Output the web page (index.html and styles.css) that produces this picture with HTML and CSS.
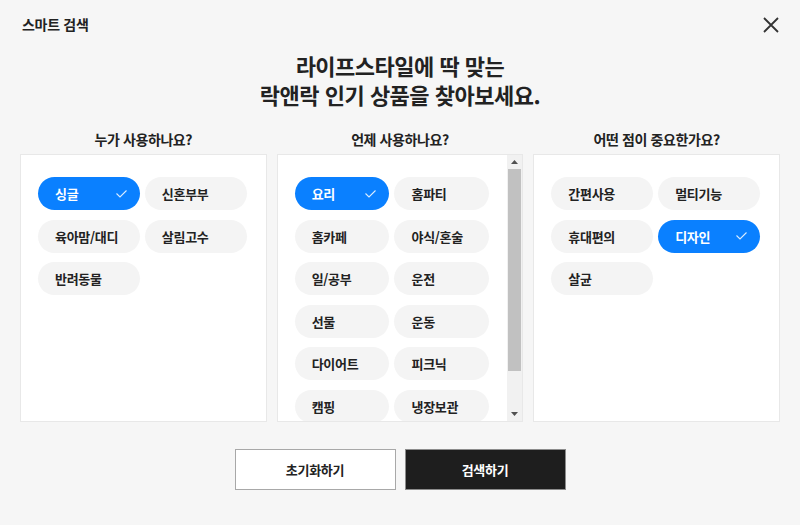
FILE: index.html
```html
<!doctype html>
<html lang="ko">
  <head>
    <meta charset="utf-8">
    <title>스마트 검색</title>
    <link rel="stylesheet" href="styles.css">
  </head>
  <body>
    <div class="modal">
      <div class="modal-header">
        <div class="modal-title">스마트 검색</div>
        <button class="close-btn" aria-label="닫기">
          <svg width="18" height="18" viewBox="0 0 18 18">
            <path d="M2 2 L16 16 M16 2 L2 16" stroke="#333" stroke-width="1.8" fill="none" />
          </svg>
        </button>
      </div>

      <h1 class="headline">라이프스타일에 딱 맞는<br>락앤락 인기 상품을 찾아보세요.</h1>

      <div class="columns">
        <div class="column">
          <div class="column-title">누가 사용하나요?</div>
          <div class="panel">
            <div class="chip-grid">
              <button class="chip selected">싱글<svg class="check" width="11" height="8" viewBox="0 0 11 8"><polyline points="0.5,3.5 4,7 10.5,0.5" /></svg></button>
              <button class="chip">신혼부부</button>
              <button class="chip">육아맘/대디</button>
              <button class="chip">살림고수</button>
              <button class="chip">반려동물</button>
            </div>
          </div>
        </div>

        <div class="column">
          <div class="column-title">언제 사용하나요?</div>
          <div class="panel scroll">
            <div class="scroll-content">
              <div class="chip-grid">
                <button class="chip selected">요리<svg class="check" width="11" height="8" viewBox="0 0 11 8"><polyline points="0.5,3.5 4,7 10.5,0.5" /></svg></button>
                <button class="chip">홈파티</button>
                <button class="chip">홈카페</button>
                <button class="chip">야식/혼술</button>
                <button class="chip">일/공부</button>
                <button class="chip">운전</button>
                <button class="chip">선물</button>
                <button class="chip">운동</button>
                <button class="chip">다이어트</button>
                <button class="chip">피크닉</button>
                <button class="chip">캠핑</button>
                <button class="chip">냉장보관</button>
              </div>
            </div>
            <div class="scrollbar">
              <div class="scroll-btn">
                <svg width="7" height="4" viewBox="0 0 7 4"><polygon points="0,4 7,4 3.5,0" /></svg>
              </div>
              <div class="scroll-track">
                <div class="scroll-thumb"></div>
              </div>
              <div class="scroll-btn">
                <svg width="7" height="4" viewBox="0 0 7 4"><polygon points="0,0 7,0 3.5,4" /></svg>
              </div>
            </div>
          </div>
        </div>

        <div class="column">
          <div class="column-title">어떤 점이 중요한가요?</div>
          <div class="panel">
            <div class="chip-grid">
              <button class="chip">간편사용</button>
              <button class="chip">멀티기능</button>
              <button class="chip">휴대편의</button>
              <button class="chip selected">디자인<svg class="check" width="11" height="8" viewBox="0 0 11 8"><polyline points="0.5,3.5 4,7 10.5,0.5" /></svg></button>
              <button class="chip">살균</button>
            </div>
          </div>
        </div>
      </div>

      <div class="actions">
        <button class="btn">초기화하기</button>
        <button class="btn dark">검색하기</button>
      </div>
    </div>
  </body>
</html>
```

FILE: styles.css
```css
:root {
  --background: #f6f6f6;
  --panel: #ffffff;
  --border: #e8e8e8;
  --text: #222222;
  --chip-bg: #f4f4f4;
  --primary: #0a80ff;
  --dark: #1e1e1e;
  --scroll-track: #f1f1f1;
  --scroll-thumb: #c1c1c1;
}

body {
  margin: 0;
  background: var(--background);
  color: var(--text);
  font-family: 'Noto Sans CJK KR', 'Noto Sans', sans-serif;
}

button {
  font-family: inherit;
  cursor: pointer;
}

.modal {
  width: 800px;
  height: 525px;
}

.modal-header {
  display: flex;
  justify-content: space-between;
  align-items: center;
  padding: 12px 20px 0 22px;
  height: 24px;
}

.modal-title {
  font-size: 14px;
  font-weight: 700;
  letter-spacing: -0.3px;
}

.close-btn {
  border: none;
  background: none;
  padding: 0;
  width: 18px;
  height: 18px;
  margin-top: 2px;
}

.headline {
  margin: 15px 0 0;
  text-align: center;
  font-size: 22px;
  line-height: 29px;
  font-weight: 700;
  letter-spacing: -0.5px;
}

.columns {
  display: grid;
  grid-template-columns: repeat(3, 1fr);
  gap: 10px;
  padding: 0 20px;
  margin-top: 20px;
}

.column-title {
  text-align: center;
  font-size: 14px;
  font-weight: 700;
  line-height: 20px;
  letter-spacing: -0.4px;
  margin-bottom: 5px;
}

.panel {
  height: 266px;
  background: var(--panel);
  border: 1px solid var(--border);
  box-sizing: content-box;
}

.panel.scroll {
  display: flex;
}

.scroll-content {
  flex: 1;
  overflow: hidden;
}

.scrollbar {
  width: 15px;
  display: flex;
  flex-direction: column;
  background: var(--scroll-track);
}

.scroll-btn {
  height: 14px;
  display: flex;
  align-items: center;
  justify-content: center;
  fill: #505050;
}

.scroll-track {
  flex: 1;
  padding: 0 1px;
}

.scroll-thumb {
  height: 202px;
  background: var(--scroll-thumb);
}

.chip-grid {
  display: grid;
  grid-template-columns: 1fr 1fr;
  column-gap: 5px;
  row-gap: 9.6px;
  padding: 22px 19px 22px 17px;
}

.scroll .chip-grid {
  padding-right: 18px;
}

.chip {
  display: flex;
  align-items: center;
  justify-content: space-between;
  height: 33px;
  padding: 0 13px 0 17px;
  border: none;
  border-radius: 17px;
  background: var(--chip-bg);
  color: var(--text);
  font-size: 13px;
  font-weight: 700;
  letter-spacing: -0.3px;
  text-align: left;
}

.chip.selected {
  background: var(--primary);
  color: #ffffff;
}

.check {
  fill: none;
  stroke: rgba(255, 255, 255, 0.85);
  stroke-width: 1.1;
}

.actions {
  display: flex;
  justify-content: center;
  gap: 9px;
  margin-top: 27px;
}

.btn {
  width: 161px;
  height: 41px;
  border: 1px solid #a8a8a8;
  background: #ffffff;
  color: var(--text);
  font-size: 13px;
  font-weight: 700;
  letter-spacing: -0.3px;
}

.btn.dark {
  background: var(--dark);
  border-color: #8c8c8c;
  color: #ffffff;
}
```
